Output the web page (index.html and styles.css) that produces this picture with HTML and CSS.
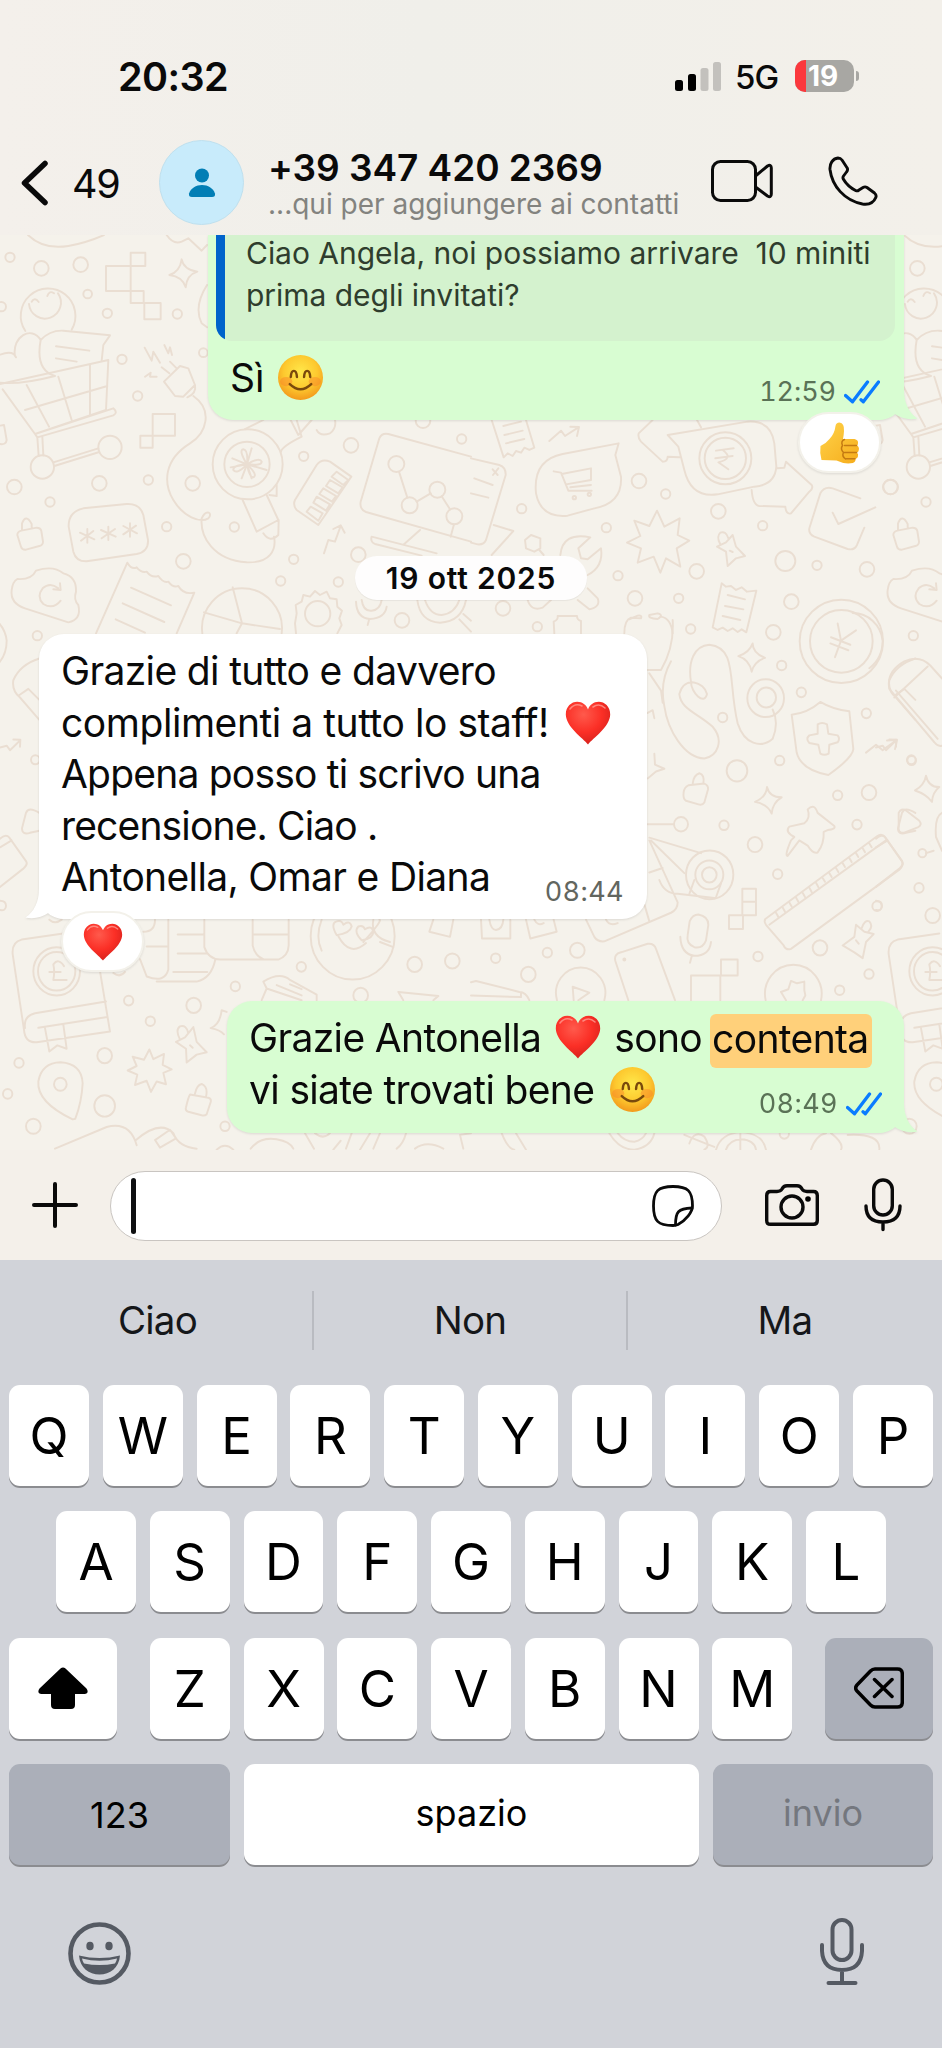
FILE: index.html
```html
<!DOCTYPE html>
<html lang="it">
<head>
<meta charset="utf-8">
<title>Chat</title>
<link rel="stylesheet" href="styles.css">
</head>
<body>
<svg class="defs" width="0" height="0" aria-hidden="true">
  <defs>
    <radialGradient id="face" cx=".5" cy=".38" r=".62"><stop offset="0" stop-color="#ffe84a"/><stop offset=".6" stop-color="#fdc92f"/><stop offset="1" stop-color="#f39a1c"/></radialGradient>
    <radialGradient id="red" cx=".4" cy=".3" r=".75"><stop offset="0" stop-color="#ff5a4c"/><stop offset=".55" stop-color="#fb2f26"/><stop offset="1" stop-color="#d3201b"/></radialGradient>
    <linearGradient id="thumb" x1="0" y1="0" x2="1" y2="1"><stop offset="0" stop-color="#ffd34a"/><stop offset="1" stop-color="#f6ac1b"/></linearGradient>
    <symbol id="smile" viewBox="0 0 44 44">
      <circle cx="22" cy="22" r="22" fill="url(#face)"/>
      <ellipse cx="8" cy="26" rx="6" ry="4.500" fill="#f9822b" opacity=".45"/><ellipse cx="36" cy="26" rx="6" ry="4.500" fill="#f9822b" opacity=".45"/>
      <path d="M12.500 21.500C13 13.500 18 13.500 18.500 21.500M25.500 21.500C26 13.500 31 13.500 31.500 21.500" fill="none" stroke="#7a4a0c" stroke-width="2.400" stroke-linecap="round"/>
      <path d="M11.500 28.500Q22 38.500 32.500 28.500" fill="none" stroke="#7a4a0c" stroke-width="2.400" stroke-linecap="round"/>
    </symbol>
    <symbol id="heart" viewBox="0 0 46 44">
      <path d="M23 43.500C18 37 1 26 .8 13.500C.8 5.500 6.500 .8 12.200 .8C17.500 .8 21.300 4 23 8.500C24.700 4 28.500 .8 33.800 .8C39.500 .8 45.200 5.500 45.200 13.500C45 26 28 37 23 43.500Z" fill="url(#red)"/>
      <path d="M5 8Q10 1.500 17 5M28 6Q34 1.500 40 7" fill="none" stroke="#ff9a90" stroke-width="1.600" stroke-linecap="round" opacity=".8"/>
    </symbol>
    <symbol id="thumbup" viewBox="0 0 40 42">
      <path d="M1 24Q6 22 10 17Q15 12 16 4Q16.500 .5 20 .5Q25 1 24.500 9Q24.300 13 23.500 17H35Q39 18 38.500 21Q38.500 23 37.500 23.500Q40 25 39.300 28Q39 30 37.500 30.500Q39.300 32 38.300 35Q37.500 36.500 36 36.700Q36.500 41 31 41.300Q24 42 17 38.500L2 38Q0 31 1 24Z" fill="url(#thumb)"/>
      <path d="M37 23.500H25M37 30.500H25M35.500 36.700H26M25 17.500Q21 19 23 23.500Q20.500 27 24 30.500Q22 34 26 37" fill="none" stroke="#c47a12" stroke-width="1.500" stroke-linecap="round"/>
    </symbol>
    <symbol id="ticks" viewBox="0 0 36 24">
      <path d="M1.500 15.500L8.500 21.800L23.500 2M17 19.800L19.300 21.800L34.500 2" fill="none" stroke="#0a7cff" stroke-width="3.300" stroke-linecap="round" stroke-linejoin="round"/>
    </symbol>
    <symbol id="tail" viewBox="0 0 40 36">
      <path d="M18 0H26V6C26 19 31 29 39.500 34.500Q27 37 16 29.500Q10 35 0 36V12Z" fill="currentColor"/>
    </symbol>
    <g id="edge">
      <g transform="translate(0 230) scale(.33333)">
        <circle cx="30" cy="82" r="14"/><circle cx="124" cy="115" r="22"/><circle cx="242" cy="104" r="22"/><circle cx="263" cy="192" r="13"/><circle cx="4" cy="230" r="14"/>
        <path d="M84 15Q130 60 205 48Q260 38 312 15"/>
        <path d="M76 303A82 82 0 1 1 215 299M87 222A48 48 0 1 0 174 190M95 215Q104 200 116 216M142 198Q148 180 162 190"/>
        <path d="M45 378C35 320 95 285 122 330M0 374Q40 360 48 382M0 458Q60 465 165 438M122 330Q150 300 190 302L330 316L310 345L305 392M122 330Q105 420 165 438M168 349L268 362M168 385L230 395"/>
        <path d="M0 462L325 390L318 540L105 612L8 478M80 465L147 590M175 440L215 570M270 404V555M322 468L75 540M105 612L340 535Q355 548 340 556L112 622ZM112 622L116 678M127 620L130 676M160 697L295 655M163 708L298 666"/>
        <circle cx="127" cy="711" r="35"/><circle cx="330" cy="652" r="35"/><circle cx="43" cy="771" r="22"/><circle cx="150" cy="816" r="14"/>
        <path d="M0 587L12 585L20 630Q18 645 0 642M52 915Q52 905 64 902L110 893Q122 893 124 903L129 935Q129 945 118 948L78 959Q66 960 63 950ZM66 901V880Q78 850 95 882V895"/>
        <path d="M52 1047Q95 1050 108 1022Q160 1005 190 1030Q230 1040 228 1085Q220 1110 235 1125Q245 1170 205 1177L75 1135Q30 1120 35 1080Q38 1055 52 1047ZM175 1075Q150 1055 128 1075Q108 1100 130 1122Q160 1140 182 1112M160 1078L182 1080L180 1060"/>
        <circle cx="112" cy="1217" r="14"/>
      </g>
      <g transform="translate(0 620) scale(.33333 .34440)">
        <path d="M-70 -20A90 90 0 0 1 20 60Q20 110 -20 140M118 112Q60 130 40 175Q35 205 60 225L118 290M55 220L85 200L118 232M0 370L20 365L30 378L60 350M40 347L61 348L60 368M118 560Q85 540 78 560L66 605Q66 625 90 618L118 612M0 635Q18 620 28 632L78 700Q85 710 70 722L0 775M0 660L35 640M0 815Q18 815 18 830Q18 845 0 842"/>
        <circle cx="106" cy="406" r="13"/>
        <path d="M300 1020L330 1195L110 1226Q75 1228 72 1190L38 970Q35 935 65 928L190 910M75 1185Q70 1150 105 1142L318 1108M115 1184L322 1153M135 1185L148 1253L172 1235L200 1245L190 1175"/>
        <circle cx="170" cy="1020" r="70"/><circle cx="170" cy="1020" r="56"/>
        <path d="M192 1005Q175 980 160 1000Q165 1020 160 1045H200M148 1022H182"/>
        <path d="M218 1450Q110 1400 115 1340Q125 1285 182 1284Q245 1288 248 1345Q245 1400 226 1448Z"/>
        <circle cx="181" cy="1348" r="19"/><circle cx="57" cy="1286" r="14"/><circle cx="23" cy="1376" r="14"/><circle cx="100" cy="1470" r="22"/>
      </g>
    </g>
  </defs>
</svg>
<div class="phone">
  <header class="header">
    <div class="status">
      <span class="clock">20:32</span>
      <div class="indicators">
        <svg class="signal" viewBox="0 0 46 30"><rect x="0" y="19" width="8" height="11" rx="2.500"/><rect x="13" y="13" width="8" height="17" rx="2.500"/><rect x="25.500" y="7" width="8" height="23" rx="2.500" fill="#c3c1bd"/><rect x="38" y="1" width="8" height="29" rx="2.500" fill="#c3c1bd"/></svg>
        <span class="network">5G</span>
        <div class="battery"><span class="battery-level"></span><span class="battery-text">19</span></div>
        <span class="battery-nub"></span>
      </div>
    </div>
    <div class="contact">
      <svg class="back" viewBox="0 0 28 46"><path d="M24 3.500L3.500 23L24 42.500" fill="none" stroke="#0a0a0a" stroke-width="5.500" stroke-linecap="round" stroke-linejoin="round"/></svg>
      <span class="unread">49</span>
      <div class="avatar"><svg width="28" height="30" viewBox="0 0 28 30" fill="#027eb5"><circle cx="14" cy="7.500" r="7"/><path d="M1 25.500C3 20 8 17 14 17S25 20 27 25.500Q27.500 29 24 29H4Q.5 29 1 25.500Z"/></svg></div>
      <div class="identity">
        <div class="name">+39 347 420 2369</div>
        <div class="hint">...qui per aggiungere ai contatti</div>
      </div>
      <svg class="video" viewBox="0 0 62 42"><g fill="none" stroke="#0a0a0a" stroke-width="3" stroke-linejoin="round"><rect x="1.500" y="1.500" width="43" height="39" rx="8"/><path d="M44.500 16L56.500 6Q60.300 4 60.300 8V34Q60.300 38 56.500 36L44.500 27"/></g></svg>
      <svg class="call" viewBox="0 0 50 50"><path d="M2 13.500C1.500 8 4.500 2.500 10 2Q12.500 2 14 4L19.200 12Q20.200 14 18.500 16L15.500 20Q14.500 21.500 15.300 23Q19.500 30.500 28 34.700Q29.500 35.200 31 34L35 31.500Q37 30.300 39 31.500L46.500 37Q48.800 39 47.800 41.500C45.500 47 40 48.800 34.500 48C16.500 44.500 4 30 2 13.500Z" fill="none" stroke="#0a0a0a" stroke-width="2.900" stroke-linejoin="round"/></svg>
    </div>
  </header>

  <main class="chat">
    <svg class="wallpaper" viewBox="0 235 942 915" fill="none" stroke="#eaded2" stroke-width="5.800" stroke-linejoin="round" stroke-linecap="round">
      <use href="#edge"/>
      <use href="#edge" x="876"/>
      <g transform="translate(0 230) scale(.33333)">
        <path d="M318 108H392V183H318ZM392 68H436V108H392ZM392 183H431V219H392ZM433 219H482V268H433ZM458 552H525V617H458ZM421 617H458V653H421Z"/>
        <path d="M545 88Q550 118 592 125Q560 135 557 172Q548 140 508 135Q540 125 545 88ZM500 15Q520 45 545 35L565 25L605 62L621 45M621 165Q580 230 605 280L621 292"/>
        <circle cx="322" cy="250" r="14"/><circle cx="532" cy="252" r="14"/><circle cx="366" cy="388" r="14"/><circle cx="413" cy="498" r="14"/><circle cx="298" cy="760" r="22"/><circle cx="445" cy="750" r="14"/><circle cx="578" cy="760" r="22"/><circle cx="500" cy="890" r="14"/><circle cx="550" cy="994" r="22"/><circle cx="703" cy="891" r="14"/><circle cx="610" cy="368" r="13"/><circle cx="911" cy="679" r="14"/><circle cx="1053" cy="646" r="22"/><circle cx="881" cy="988" r="14"/><circle cx="842" cy="1053" r="14"/><circle cx="1015" cy="1056" r="14"/><circle cx="1075" cy="974" r="22"/><circle cx="1206" cy="1171" r="22"/><circle cx="1385" cy="627" r="14"/><circle cx="1269" cy="572" r="22"/>
        <path d="M434 353L455 392L460 365L480 398M493 345L505 370L510 352L516 375M435 440L452 428L450 440L470 440M492 455L540 408L565 415L585 465L550 500L525 498ZM485 412L508 430M510 395L530 415M585 465Q590 490 562 502"/>
        <path d="M580 498C640 540 620 610 570 640C490 690 490 760 520 810C550 860 600 880 625 865C640 850 620 835 605 865C600 920 640 990 740 997C810 1000 830 960 822 920"/>
        <circle cx="743" cy="703" r="105"/><circle cx="741" cy="703" r="68"/>
        <path d="M741 703Q715 660 730 658Q745 660 741 703Q780 680 785 695Q785 708 741 703Q775 735 760 742Q748 742 741 703Q710 735 700 720Q698 705 741 703M697 685L741 703L725 745M755 655L741 703L800 720M692 712L741 703L755 745"/>
        <path d="M728 810L770 905L835 870L800 795M790 910Q810 940 835 915L836 870M808 795L830 798V765M735 597L790 570M843 665Q845 650 905 620L890 570M872 570L895 615L935 570M950 600Q960 620 990 610Q1010 595 1005 570"/>
        <path d="M885 810L950 705Q965 685 990 695L1054 740L955 885L890 840Q878 825 885 810ZM1010 725L1045 750L1030 765L995 740ZM990 750L1028 772L1015 790L978 768ZM970 775L1008 798L996 815L958 792ZM950 800L990 823L978 842L940 818ZM932 830L968 850L955 872L920 845ZM972 970L985 930L1005 935L1022 888M1000 897L1022 886L1034 908"/>
        <path d="M1413 680L1165 612Q1145 608 1138 625L1082 815Q1078 838 1098 846L1413 935M1115 920Q1110 935 1125 942L1265 977M1115 920L1310 970M1260 900L1212 943M1362 883L1352 920"/>
        <circle cx="1189" cy="702" r="24"/><circle cx="1229" cy="826" r="24"/><circle cx="1312" cy="779" r="24"/><circle cx="1363" cy="859" r="24"/><path d="M1197 725L1222 803M1250 815L1292 790M1325 799L1350 838"/>
        <path d="M250 835L380 822Q420 820 430 855L444 930Q446 965 410 972L260 994Q228 995 220 965L206 890Q205 845 250 835ZM262 897V938M240 908L283 928M243 932L280 903M325 890V930M303 900L347 920M305 925L345 897M390 880V920M370 888L411 910M370 913L408 887"/>
        <path d="M288 1210L382 998Q395 1020 410 1012Q425 1030 440 1025Q455 1045 475 1038Q490 1060 505 1055Q520 1075 535 1068Q550 1095 583 1088L530 1210M393 1073L513 1126M368 1120L493 1176M347 1168L435 1208"/>
        <path d="M607 1210A120 120 0 1 1 845 1210M698 1072L726 1180L840 1197M726 1180L612 1147M726 1180L710 1210"/>
        <path d="M888 1210L885 1180L890 1150L887 1125L905 1115L910 1095L930 1100L945 1083L960 1095L980 1085L990 1105L1010 1108L1012 1130L1026 1142L1018 1165L1025 1185L1012 1210"/><circle cx="953" cy="1151" r="38"/>
        <path d="M1068 1115Q1070 1165 1110 1167Q1155 1165 1160 1130M1085 1110Q1090 1145 1115 1142Q1140 1140 1145 1110M1107 1170L1103 1185M1252 1110Q1260 1175 1320 1178Q1385 1175 1398 1110M1275 1110Q1290 1155 1325 1155Q1365 1150 1378 1110M1378 1168L1413 1205M1390 1152L1413 1172"/>
      </g>
      <g transform="translate(471 230) scale(.33333)">
        <path d="M62 570L98 682L110 670L125 678L135 663L150 668L160 653L175 660L190 653L165 570M97 588L150 575M100 615L155 602M105 640L160 627M235 633L270 602L282 618L322 592M298 590L324 591L318 618"/>
        <path d="M0 685L85 705Q105 712 104 735L45 930Q38 945 20 943L0 938M10 745L65 765M0 790L52 803M65 718L80 735M82 715L66 735M68 885L127 903L62 975"/>
        <path d="M275 672L443 640L433 675L450 740Q455 820 370 835L290 857Q210 865 195 790Q185 690 275 672ZM248 724L270 728L292 782H362M272 732L360 715V750L285 763M298 772L360 765"/><circle cx="310" cy="803" r="5"/><circle cx="355" cy="793" r="5"/>
        <circle cx="504" cy="753" r="22"/><circle cx="584" cy="792" r="14"/><circle cx="152" cy="836" r="14"/><circle cx="406" cy="893" r="14"/><circle cx="742" cy="844" r="22"/><circle cx="875" cy="887" r="14"/><circle cx="943" cy="993" r="30"/><circle cx="1038" cy="1006" r="14"/><circle cx="1188" cy="1018" r="22"/><circle cx="677" cy="1024" r="22"/><circle cx="441" cy="1037" r="14"/><circle cx="492" cy="1105" r="22"/><circle cx="623" cy="1105" r="14"/><circle cx="96" cy="1135" r="22"/><circle cx="199" cy="1190" r="14"/><circle cx="659" cy="1197" r="14"/><circle cx="907" cy="1207" r="22"/><circle cx="961" cy="1115" r="22"/><circle cx="1259" cy="771" r="22"/>
        <path d="M545 570L503 610Q500 625 510 635L575 695Q590 695 590 680L625 682M678 570L690 592M918 715L940 713L945 695L1022 765Q1028 775 1015 785L960 850Q945 855 943 830L865 828Q845 825 842 780M590 615L830 575Q900 570 910 640L916 710Q912 765 850 770L740 793Q660 805 640 720L622 650Z"/>
        <circle cx="763" cy="685" r="78"/><circle cx="763" cy="685" r="62"/><path d="M735 662L788 655M733 685L785 678M755 660Q790 685 742 697L772 718"/>
        <path d="M558 842L580 890L626 865L620 915L655 932L617 955L628 1010L585 985L568 1028L548 980L500 998L510 955L468 938L508 918L490 872L535 888Z"/>
        <path d="M162 930L180 915L208 925V955L190 965L165 955ZM205 960L218 975M268 975Q275 905 358 922L322 955L330 985L350 988L390 955Q398 1010 350 1035M350 1075L380 1105Q390 1130 355 1138L320 1110M170 1110Q180 1145 215 1133L240 1110"/>
        <path d="M738 950L765 937L785 915L795 950L822 978L795 985L770 1008L765 965ZM748 943Q735 920 748 908Q765 902 772 925M776 962L785 966"/>
        <path d="M1168 805L1085 775Q1060 768 1048 790L1015 895Q1012 912 1030 920L1130 957Q1150 962 1158 945L1180 893M1085 848L1102 882L1213 832"/>
        <path d="M752 1060L765 1070L780 1068L795 1080L812 1072L828 1085L856 1082L826 1207L812 1198L800 1206L785 1195L770 1203L755 1193L740 1200L725 1192ZM770 1095L822 1108M762 1128L817 1138M755 1158L808 1170"/>
        <path d="M250 1210L248 1175Q262 1170 260 1158L318 1158Q318 1170 330 1173V1210M460 1210Q460 1170 480 1163L510 1165Q515 1155 500 1157L475 1168M535 1155Q530 1165 560 1167Q580 1155 560 1150ZM570 1160Q600 1165 605 1210"/>
        <circle cx="1111" cy="1234" r="125"/><circle cx="1111" cy="1234" r="94"/>
      </g>
      <g transform="translate(471 620) scale(.33333 .34440)">
        <path d="M1100 10L1110 60L1155 30M1110 60L1092 108M1080 50L1138 72M1078 68L1132 88"/>
        <path d="M605 0Q610 80 570 145H530M600 120Q565 180 580 250C590 320 640 400 700 402C740 395 760 350 725 310C680 270 630 260 625 215C640 160 700 180 708 215C700 250 660 210 660 180C650 120 670 75 715 72C800 80 770 180 800 300C820 360 870 375 905 345C920 310 915 280 905 260M535 155L570 205L575 240M530 270L545 262L550 285M550 388L552 420L580 432L555 440L530 460"/>
        <circle cx="884" cy="227" r="55"/><circle cx="886" cy="225" r="29"/>
        <path d="M845 68Q845 95 882 110Q850 120 842 150Q835 115 802 105Q835 95 845 68ZM888 485Q895 515 932 515Q905 530 902 562Q890 535 852 528Q885 515 888 485ZM1365 452Q1372 485 1405 485Q1385 500 1383 528Q1365 505 1332 495Q1360 480 1365 452Z"/>
        <circle cx="932" cy="132" r="14"/><circle cx="755" cy="283" r="14"/><circle cx="991" cy="210" r="14"/><circle cx="1186" cy="271" r="14"/><circle cx="926" cy="408" r="14"/><circle cx="798" cy="438" r="31"/><circle cx="1322" cy="408" r="13"/><circle cx="1100" cy="509" r="14"/><circle cx="1194" cy="501" r="22"/><circle cx="1158" cy="594" r="14"/><circle cx="759" cy="596" r="14"/><circle cx="852" cy="652" r="22"/><circle cx="920" cy="738" r="14"/><circle cx="1344" cy="778" r="14"/><circle cx="1218" cy="831" r="14"/><circle cx="1385" cy="858" r="22"/><circle cx="1047" cy="952" r="22"/><circle cx="861" cy="977" r="14"/><circle cx="1194" cy="1028" r="14"/><circle cx="1106" cy="1075" r="14"/><circle cx="319" cy="959" r="22"/><circle cx="229" cy="966" r="14"/><circle cx="74" cy="982" r="14"/><circle cx="172" cy="1029" r="22"/>
        <path d="M962 275Q1010 270 1048 238Q1085 260 1135 265L1147 375Q1145 400 1072 450Q990 435 977 385ZM1040 303Q1053 295 1068 303L1072 330L1100 335Q1108 345 1100 355L1075 362L1073 388Q1060 395 1048 388L1042 362L1015 357Q1003 345 1015 335L1040 330ZM1185 385L1215 362L1235 378L1275 350M1248 350L1278 348L1272 375"/>
        <path d="M1413 170L1378 132Q1345 100 1300 120Q1245 150 1255 200L1390 355Q1400 368 1413 365M1270 225L1370 135M1275 205L1400 345"/>
        <path d="M638 500Q640 485 652 480L700 475Q713 480 711 492L700 530Q695 538 685 536L645 525Q635 520 638 500ZM665 475Q668 450 685 445Q702 450 697 475"/>
        <path d="M1010 550Q1030 530 1040 560L1090 598Q1095 608 1070 610L1058 615Q1060 650 1040 675Q1025 680 1010 655L985 640L950 685Q940 685 960 640L970 630Q940 615 955 600L1000 590Q1020 575 1010 550ZM1283 560Q1290 545 1305 553L1345 583Q1355 595 1340 602L1298 618Q1280 618 1283 600Z"/>
        <path d="M883 868L1218 628Q1232 618 1242 630L1293 700Q1298 715 1285 725L960 955Q945 960 938 945L885 885Q878 875 883 868ZM895 885L1245 640M915 850L922 862M935 835L942 847M955 820L962 832M975 806L982 818M995 792L1002 804M1015 777L1022 790M1035 763L1042 775M1055 749L1062 760M1075 735L1082 746M1095 720L1102 732M1115 706L1122 717M1135 691L1142 703M1155 677L1162 688M1175 663L1182 674M1195 649L1202 660"/>
        <path d="M530 593H608M535 632L690 677M540 640L640 735M535 640L620 820Q620 840 600 850L400 933Q380 935 370 920L345 870M575 720L535 733M565 755Q580 795 620 795L730 807M655 795L670 755M735 805L750 765M520 825L535 875"/><circle cx="630" cy="593" r="21"/><circle cx="716" cy="740" r="71"/><circle cx="715" cy="740" r="42"/><circle cx="715" cy="740" r="22"/>
        <path d="M814 780H855V857H814ZM814 818H855M774 857H816V897H774ZM750 986H800V1032H750ZM660 1104V1032H748V1104"/>
        <path d="M682 855Q712 860 712 885L705 930Q695 955 670 950Q645 940 650 915L656 875Q665 855 682 855ZM628 920Q630 970 670 975Q715 975 720 935M662 977L657 995"/>
        <path d="M30 870L33 925H118V870M165 870L178 925L257 905L248 870M55 870Q60 900 75 900Q95 898 97 870M190 870Q200 890 218 880M405 870Q415 890 440 880M450 965L530 940Q550 938 555 955L612 1104M450 965Q428 970 433 990L472 1104"/><circle cx="460" cy="986" r="3"/>
        <path d="M258 1104A74 74 0 1 1 400 1104M308 1104L305 1065L355 1082L322 1104M0 1052L15 1048L145 1080Q165 1080 175 1104M0 1090L150 1095V1082M884 1104A85 85 0 1 1 1050 1104M930 1080L952 1072L960 1048L978 1055L1000 1050L1000 1075L1003 1090L995 1104M930 1080L945 1104"/>
        <path d="M1115 945L1150 920L1155 885L1180 905L1208 912L1185 935L1175 982L1150 965ZM1172 895Q1180 870 1195 875Q1208 890 1192 905M1155 930L1163 940M1413 560Q1390 570 1395 630L1413 670M1365 677L1388 670"/><circle cx="1354" cy="677" r="12"/>
        <path d="M92 1490Q110 1535 130 1538M135 1490L165 1538M415 1490Q445 1538 490 1538Q540 1530 550 1490M440 1490Q460 1515 490 1515Q515 1510 525 1490M640 1495Q690 1515 730 1530M655 1520Q670 1480 700 1500Q720 1530 700 1538M735 1538Q750 1490 810 1487Q875 1490 885 1538M765 1538Q775 1510 810 1508Q850 1510 855 1538M808 1490V1538M1020 1538Q1035 1495 1065 1490M1080 1490Q1120 1520 1110 1538M1130 1495Q1230 1490 1225 1538"/><circle cx="940" cy="1492" r="14"/>
      </g>
      <g transform="translate(0 620) scale(.33333 .34440)">
        <path d="M505 870V1015Q495 1055 440 1035L420 985M440 948H505M430 905Q465 905 465 870M613 870V950Q625 985 660 986L835 986Q865 975 866 945V870M758 870V945Q765 975 790 985M758 913H865M533 913H610M533 968H620M520 1022H622M470 1050H590Q635 1040 646 985M340 1025Q360 1040 375 1022M148 870Q165 885 185 870"/>
        <circle cx="1058" cy="918" r="126"/><path d="M1015 918Q1050 980 1098 938M1090 935Q1150 870 1138 870M1140 935L1180 950M965 870Q945 920 965 960M1010 915Q990 880 1010 875Q1025 870 1030 885Q1050 870 1055 890Q1050 910 1010 915ZM1085 930Q1060 905 1075 890Q1090 885 1095 898Q1115 885 1120 905Q1120 925 1085 930ZM1120 870Q1110 920 1170 935M1300 870L1288 905L1350 920L1360 870"/>
        <path d="M790 1050Q840 1020 870 1045L950 1088V1104M790 1050L800 1070L905 1104M800 1070L785 1104M830 1060L905 1090M870 1058L905 1072M1195 1080L1315 1092L1300 1104M1195 1080L1210 1104"/>
        <circle cx="904" cy="1007" r="14"/><circle cx="706" cy="1064" r="14"/><circle cx="1082" cy="1090" r="22"/><circle cx="1244" cy="1000" r="22"/><circle cx="1357" cy="990" r="22"/><circle cx="386" cy="1105" r="14"/><circle cx="581" cy="1119" r="22"/><circle cx="451" cy="1165" r="14"/><circle cx="314" cy="1265" r="22"/><circle cx="314" cy="1411" r="31"/><circle cx="675" cy="1470" r="14"/>
        <path d="M448 1247L460 1275L492 1260L488 1292L515 1305L490 1315L498 1348L470 1340L453 1370L440 1338L405 1350L412 1320L383 1308L410 1295L398 1268L432 1277Z"/>
        <path d="M528 1225L555 1212L580 1182L590 1225L620 1255L590 1262L560 1285L558 1245ZM540 1218Q525 1190 540 1180Q560 1175 565 1200M570 1235L578 1242M680 1138L665 1133Q660 1175 632 1185Q660 1190 672 1203"/>
        <path d="M558 1415Q565 1385 570 1378L625 1387Q635 1390 632 1400L620 1435Q615 1440 605 1438L565 1428Q555 1425 558 1415ZM585 1375Q590 1350 605 1347Q625 1355 618 1385M165 1535L320 1472Q390 1455 410 1525M408 1510Q480 1450 520 1490Q535 1530 590 1535M465 1510L510 1480L528 1505L480 1532ZM650 1538Q675 1515 700 1538M752 1535Q780 1500 830 1508Q870 1515 880 1535M915 1490L942 1535M945 1490Q970 1510 990 1490M1000 1538L1022 1512M1055 1490L1038 1535M1110 1490Q1085 1530 1080 1538M1140 1490L1120 1535M1218 1490Q1210 1520 1190 1535M1245 1535Q1280 1510 1330 1535M1413 1490L1380 1495L1390 1535"/>
      </g>
    </svg>

    <section class="bubble out first">
      <svg class="tail"><use href="#tail"/></svg>
      <div class="quote"><span class="quote-bar"></span><div class="quote-text"><div class="q1">Ciao Angela, noi possiamo arrivare &nbsp;10 miniti</div><div class="q2">prima degli invitati?</div></div></div>
      <div class="text">Sì <svg class="emo close"><use href="#smile"/></svg></div>
      <div class="meta">12:59<svg class="ticks"><use href="#ticks"/></svg></div>
      <div class="reaction right"><svg width="41" height="42"><use href="#thumbup"/></svg></div>
    </section>

    <div class="date">19 ott 2025</div>

    <section class="bubble in">
      <svg class="tail"><use href="#tail"/></svg>
      <div class="text">
        <div class="l1">Grazie di tutto e davvero</div>
        <div class="l2">complimenti a tutto lo staff!<svg class="emo heart"><use href="#heart"/></svg></div>
        <div class="l3">Appena posso ti scrivo una</div>
        <div class="l4">recensione. Ciao .</div>
        <div class="l5">Antonella, Omar e Diana</div>
      </div>
      <div class="meta">08:44</div>
      <div class="reaction left"><svg width="40" height="38"><use href="#heart"/></svg></div>
    </section>

    <section class="bubble out last">
      <svg class="tail"><use href="#tail"/></svg>
      <div class="text">
        <div class="m1"><span>Grazie Antonella</span><svg class="emo heart"><use href="#heart"/></svg><span class="sono">sono</span><mark>contenta</mark></div>
        <div class="m2">vi siate trovati bene<svg class="emo"><use href="#smile"/></svg></div>
      </div>
      <div class="meta">08:49<svg class="ticks"><use href="#ticks"/></svg></div>
    </section>
  </main>

  <div class="composer">
    <svg class="plus" viewBox="0 0 46 46"><path d="M23 2V44M2 23H44" stroke="#0a0a0a" stroke-width="4" stroke-linecap="round"/></svg>
    <div class="field">
      <span class="caret"></span>
      <svg class="sticker" viewBox="0 0 42 42"><g fill="none" stroke="#0a0a0a" stroke-width="2.800" stroke-linejoin="round" stroke-linecap="round"><path d="M1.500 21C1.500 6 6 1.500 21 1.500S40.500 6 40.500 21C40.500 27 34 35 26 39.500C24 40.500 22 40.500 21 40.500C6 40.500 1.500 36 1.500 21Z"/><path d="M23.500 40C23.500 27 26 23.500 40 23"/></g></svg>
    </div>
    <svg class="camera" viewBox="0 0 54 42"><g fill="none" stroke="#0a0a0a" stroke-width="3.400" stroke-linejoin="round"><path d="M5.500 7.500H12Q15.500 7.500 17 5Q18.500 1.700 22 1.700H32Q35.500 1.700 37 5Q38.500 7.500 42 7.500H48.500Q52.300 7.500 52.300 11.500V36.500Q52.300 40.300 48.500 40.300H5.500Q1.700 40.300 1.700 36.500V11.500Q1.700 7.500 5.500 7.500Z"/><circle cx="27" cy="23" r="11"/></g><circle cx="43" cy="15" r="2.800"/></svg>
    <svg class="mic" viewBox="0 0 38 54"><g fill="none" stroke="#0a0a0a" stroke-width="3.400" stroke-linecap="round"><rect x="9.700" y="2" width="18.600" height="35" rx="9.300"/><path d="M2 28Q2 44 19 44Q36 44 36 28M19 44V51.500"/></g></svg>
  </div>

  <div class="keyboard">
    <div class="suggestions"><span>Ciao</span><span>Non</span><span>Ma</span></div>
    <div class="row"><b class="key">Q</b><b class="key">W</b><b class="key">E</b><b class="key">R</b><b class="key">T</b><b class="key">Y</b><b class="key">U</b><b class="key">I</b><b class="key">O</b><b class="key">P</b></div>
    <div class="row middle"><b class="key">A</b><b class="key">S</b><b class="key">D</b><b class="key">F</b><b class="key">G</b><b class="key">H</b><b class="key">J</b><b class="key">K</b><b class="key">L</b></div>
    <div class="row">
      <b class="key shift"><svg width="50" height="42" viewBox="0 0 50 42"><path d="M22.500 1.500Q25 -.5 27.500 1.500L48.500 21.500Q51.500 26 46.500 27H37V38Q37 42 33 42H17Q13 42 13 38V27H3.500Q-1.500 26 1.500 21.500Z"/></svg></b>
      <b class="key">Z</b><b class="key">X</b><b class="key">C</b><b class="key">V</b><b class="key">B</b><b class="key">N</b><b class="key">M</b>
      <b class="key gray delete"><svg width="50" height="42" viewBox="0 0 50 42"><path d="M21 2H43.500Q48.300 2 48.300 7V35Q48.300 40 43.500 40H21Q18.500 40 16.500 38L3 24Q.3 21 3 18L16.500 4Q18.500 2 21 2ZM20.500 12.500L38 29.500M38 12.500L20.500 29.500" fill="none" stroke="#000" stroke-width="3.500" stroke-linecap="round" stroke-linejoin="round"/></svg></b>
    </div>
    <div class="row wide"><b class="key gray digits">123</b><b class="key space">spazio</b><b class="key gray enter">invio</b></div>
    <div class="bottom">
      <svg class="grin" viewBox="0 0 63 63"><circle cx="31.500" cy="31.500" r="29" fill="none" stroke="#555a63" stroke-width="4.600"/><g fill="#555a63"><ellipse cx="22" cy="24" rx="3.700" ry="4.300"/><ellipse cx="41" cy="24" rx="3.700" ry="4.300"/><path fill-rule="evenodd" d="M11 33.500Q31.500 38.500 52 33.500C51 46 42 52.500 31.500 52.500S12 46 11 33.500ZM14 36.500Q14.500 39.500 16 41.500Q31.500 44.500 47 41.500Q48.500 39.500 49 36.500Q31.500 41 14 36.500Z"/></g></svg>
      <svg class="dictate" viewBox="0 0 44 67"><g fill="none" stroke="#555a63" stroke-width="4" stroke-linecap="round"><rect x="12.500" y="2" width="19" height="40" rx="9.500"/><path d="M2 27V33Q3 52 22 52Q41 52 42 33V27M22 52V64M8.500 65H35.500"/></g></svg>
    </div>
  </div>
</div>
</body>
</html>
```

FILE: styles.css
```css
* { box-sizing: border-box; }
body { margin: 0; font-family: Inter, "Liberation Sans", sans-serif; color: #0a0a0a; font-feature-settings: "calt" 0; }
.defs { position: absolute; }
svg { display: block; flex: none; }
.phone { width: 942px; height: 2048px; display: flex; flex-direction: column; overflow: hidden; background: #d1d3d9; white-space: nowrap; }

/* header */
.header { height: 235px; flex: none; background: linear-gradient(90deg, #f4f0eb, #f0efea 45%, #f3f0ea); }
.status { height: 140px; padding: 52px 83px 0 118px; display: flex; justify-content: space-between; align-items: flex-start; }
.clock { font-size: 39.500px; font-weight: 600; line-height: 50px; letter-spacing: -.6px; }
.indicators { display: flex; align-items: center; height: 48px; }
.signal { width: 46px; height: 30px; }
.network { margin-left: 14px; width: 44px; font-size: 33px; font-weight: 500; letter-spacing: -1px; line-height: 48px; padding-top: 2px; }
.battery { margin-left: 16px; width: 59px; height: 32px; border-radius: 10px; background: #a8a7a3; overflow: hidden; display: flex; align-items: center; }
.battery-level { width: 11px; height: 32px; background: #fb383d; }
.battery-text { margin-left: 2px; color: #fff; font-weight: 700; font-size: 28px; }
.battery-nub { margin-left: 2px; width: 3px; height: 10px; border-radius: 0 4px 4px 0; background: #a8a7a3; }
.contact { height: 85px; padding-left: 21px; display: flex; align-items: center; }
.back { width: 28px; height: 46px; }
.unread { margin-left: 23px; width: 87px; font-size: 39.500px; letter-spacing: -1.200px; padding-top: 2px; }
.avatar { width: 85px; height: 85px; border-radius: 50%; border: 1px solid #bfe0ee; background: #c8ebfb; display: flex; align-items: center; justify-content: center; }
.identity { width: 441px; padding: 1px 0 0 24px; }
.name { font-size: 37px; font-weight: 600; line-height: 42px; letter-spacing: -.05px; }
.hint { font-size: 28px; line-height: 31px; color: #83837f; letter-spacing: 0; }
.video { margin: -4px 0 0 26px; width: 62px; height: 42px; }
.call { margin: -3px 0 0 55px; width: 50px; height: 50px; }

/* conversation */
.chat { position: relative; height: 915px; flex: none; overflow: hidden; background: #f5f2eb; display: flex; flex-direction: column; }
.wallpaper { position: absolute; left: 0; top: 0; width: 942px; height: 915px; }
.bubble { position: relative; flex: none; border-radius: 25px; display: flex; flex-direction: column; filter: drop-shadow(0 1px 1px rgba(0, 0, 0, .1)); }
.out { background: #d8fdd2; color: #d8fdd2; margin-left: auto; margin-right: 38px; }
.in { background: #fff; color: #fff; margin-left: 39px; width: 608px; height: 285px; margin-top: 34px; padding: 11px 24px 0 22px; }
.text { flex: none; position: relative; color: #0a0a0a; font-size: 39px; line-height: 51.600px; letter-spacing: -.65px; }
.l1, .l2, .l3, .l4, .l5, .m1, .m2 { height: 51.600px; }
.l2 { letter-spacing: -.45px; }
.l3 { letter-spacing: -.8px; }
.l4 { letter-spacing: -.85px; }
.first { width: 696px; height: 185px; border-radius: 0 0 25px 25px; padding: 0 9px 0 8px; }
.quote { flex: none; height: 106px; border-radius: 0 0 16px 16px; overflow: hidden; background: #d4f2ce; display: flex; }
.quote-bar { width: 9px; background: #0063cb; }
.quote-text { padding: 0 0 0 21px; color: #2f3d2d; font-size: 30px; line-height: 42px; margin-top: -3px; letter-spacing: -.03px; }
.first .text { height: 64px; padding: 11px 0 0 14px; letter-spacing: 0; }
.emo { display: inline-block; width: 45px; height: 45px; vertical-align: -8px; margin-left: 16px; }
.emo.heart { width: 46px; height: 44px; }
.emo.close { margin-left: 3px; }
.meta { align-self: flex-end; position: relative; flex: none; display: flex; align-items: center; height: 34px; color: #62665f; font-size: 27px; line-height: 34px; letter-spacing: .4px; font-variant-numeric: tabular-nums; }
.first .meta { margin: -30px 15px 0 0; color: #5a7256; letter-spacing: -.1px; }
.ticks { width: 36px; height: 24px; margin-left: 8px; }
.in .meta { margin: -28px -1px 0 0; }
.last .meta { margin: -28px 22px 0 0; color: #5a7256; }
.tail { position: absolute; width: 40px; height: 36px; bottom: 0; }
.out .tail { right: -14px; }
.in .tail { left: -14px; transform: scaleX(-1); }
.reaction { position: absolute; width: 83px; height: 61px; border-radius: 31px; background: #fff; border: 2px solid #f3f1ea; display: flex; align-items: center; justify-content: center; }
.reaction.right { right: 23px; top: 177px; }
.reaction.left { left: 22px; top: 277px; }
.date { flex: none; margin: 136px auto 0; width: 232px; height: 44px; border-radius: 22px; background: #fefdfd; font-size: 30px; letter-spacing: .8px; line-height: 44px; font-weight: 600; text-align: center; box-shadow: 0 1px 1px rgba(0, 0, 0, .06); position: relative; }
.last { width: 677px; height: 132px; margin-top: 82px; padding: 11px 0 0 22px; }
.m1 { display: flex; align-items: center; }
.m1 .emo { margin: -2px 0 0 14px; }
.sono { margin-left: 13px; }
mark { margin-left: 8px; width: 162px; height: 54px; padding-left: 2px; border-radius: 6px; background: #ffd07a; color: #0a0a0a; line-height: 50px; margin-top: 2px; margin-bottom: -4px; }

/* composer */
.composer { height: 110px; flex: none; padding: 0 38px 0 32px; background: #f4f0ea; display: flex; align-items: center; }
.plus { width: 46px; height: 46px; }
.field { margin: 2px 0 0 32px; width: 612px; height: 70px; border: 1px solid #c9c5c1; border-radius: 35px; background: #fff; padding: 0 27px 0 20px; display: flex; align-items: center; justify-content: space-between; }
.caret { width: 5px; height: 56px; border-radius: 3px; background: #0f1012; }
.sticker { width: 42px; height: 42px; }
.camera { margin-left: 43px; width: 54px; height: 42px; }
.mic { margin-left: 45px; width: 38px; height: 54px; }

/* keyboard */
.keyboard { flex: 1; display: flex; flex-direction: column; background: #d1d3d9; }
.suggestions { height: 125px; padding: 31px 0 0; display: grid; grid-template-columns: 312px 314px 316px; grid-auto-rows: 59px; }
.suggestions span { text-align: center; font-size: 38.500px; line-height: 59px; letter-spacing: -.8px; color: #15171a; }
.suggestions span:first-child { padding-left: 3px; }
.suggestions span + span { border-left: 2px solid #b9bbc1; }
.row { height: 101px; margin: 0 9px 25.400px; display: flex; gap: 13.800px; }
.row.middle { margin-left: 56px; margin-right: 56px; }
.key { flex: 1; height: 101px; border-radius: 11px; background: #fff; box-shadow: 0 2px 0 #8b8c90; color: #000; font-weight: 400; font-size: 51px; display: flex; align-items: center; justify-content: center; }
.gray { background: #abafb9; }
.shift { flex: 0 0 108px; margin-right: 19px; }
.delete { flex: 0 0 108px; margin-left: 19px; }
.wide .key { font-size: 36px; padding-bottom: 4px; }
.wide .digits { flex: 0 0 221px; padding: 0; }
.wide .enter { flex: 0 0 220px; color: #74777e; }
.bottom { display: flex; justify-content: space-between; align-items: center; padding: 0 78px 0 68px; height: 67px; margin-top: 27px; }
.grin { width: 63px; height: 63px; margin-top: 5px; }
.dictate { width: 44px; height: 67px; }
```
